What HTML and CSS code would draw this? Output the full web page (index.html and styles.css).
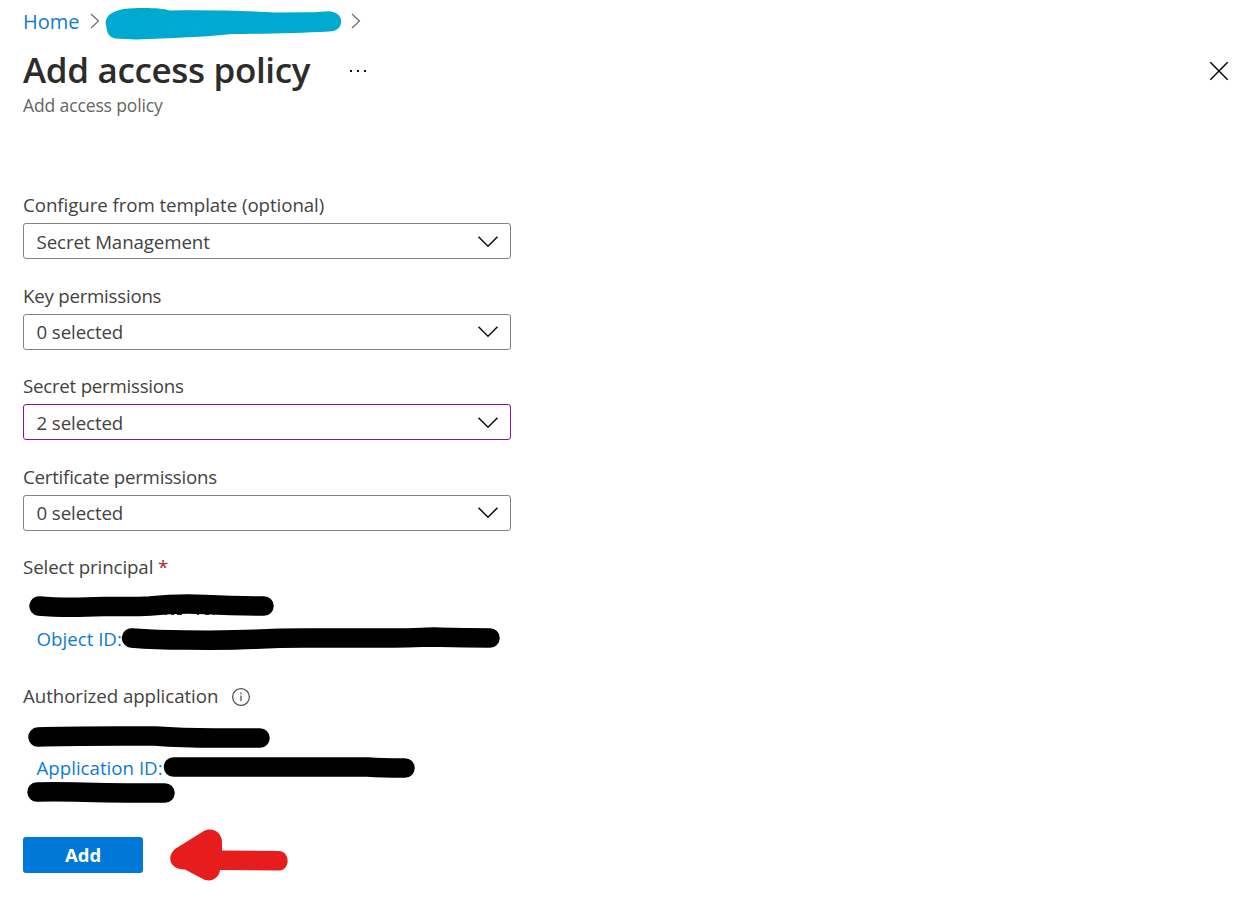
FILE: index.html
```html
<!DOCTYPE html>
<html lang="en">
<head>
<meta charset="utf-8">
<title>Add access policy</title>
<link rel="stylesheet" href="styles.css">
</head>
<body>
<main class="blade">
  <nav class="breadcrumb">
    <a class="link home" href="#">Home</a>
    <svg class="crumb" viewBox="0 0 10 16"><path d="M1 1L8.5 8L1 15"/></svg>
    <span class="crumb-name"></span>
    <svg class="crumb" viewBox="0 0 10 16"><path d="M1 1L8.5 8L1 15"/></svg>
  </nav>
  <header class="header">
    <h1 class="title">Add access policy</h1>
    <svg class="more" viewBox="0 0 18 4"><path d="M1 1h2v2H1zM8 1h2v2H8zM15 1h2v2H15z"/></svg>
    <svg class="close" viewBox="0 0 20 20"><path d="M1.3 1.3L18.7 18.7M18.7 1.3L1.3 18.7"/></svg>
  </header>
  <p class="subtitle">Add access policy</p>

  <form class="form">
    <div class="field">
      <div class="label label-template">Configure from template (optional)</div>
      <div class="select"><span class="value">Secret Management</span><svg class="chevron" viewBox="0 0 22 14"><path d="M1.5 1.7L11 11.2L20.5 1.7"/></svg></div>
    </div>
    <div class="field">
      <div class="label label-permissions">Key permissions</div>
      <div class="select"><span class="value">0 selected</span><svg class="chevron" viewBox="0 0 22 14"><path d="M1.5 1.7L11 11.2L20.5 1.7"/></svg></div>
    </div>
    <div class="field">
      <div class="label label-permissions">Secret permissions</div>
      <div class="select select-edited"><span class="value">2 selected</span><svg class="chevron" viewBox="0 0 22 14"><path d="M1.5 1.7L11 11.2L20.5 1.7"/></svg></div>
    </div>
    <div class="field">
      <div class="label label-permissions">Certificate permissions</div>
      <div class="select"><span class="value">0 selected</span><svg class="chevron" viewBox="0 0 22 14"><path d="M1.5 1.7L11 11.2L20.5 1.7"/></svg></div>
    </div>
    <section class="principal">
      <div class="label label-principal">Select principal <span class="required">*</span></div>
      <a class="link object-id" href="#">Object ID:</a>
    </section>
    <section class="application">
      <div class="label label-app">Authorized application
        <svg class="info" viewBox="0 0 20 20"><circle cx="10" cy="10" r="8.4"/><path d="M10 8.5V14M10 5.6V7.2"/></svg>
      </div>
      <a class="link app-id" href="#">Application ID:</a>
    </section>
    <button class="add" type="button">Add</button>
  </form>

  <svg class="ink" viewBox="0 0 1255 897">
    <path class="ink-cyan" d="M105.500 23C106 15 113 11 124 9C138 7.500 160 7.500 170 10.500C205 10 240 10.500 275 12.500L315 12.300L328 11.300C346 11.500 345 31.500 329 31.500C300 33 260 34 232 34C205 37 170 38 136 39.500L115 38.500C107 36.500 107 30 106.500 27Z"/>
    <path class="ink-black" d="M39 606C60 608 80 607.500 104 606.500C120 606.500 135 607 150 606C170 604 185 603.500 205 604.500C225 605.500 245 606 264 606"/>
    <path class="ink-trace" d="M165 614.500h2M171 614.500h3M177 614.500h5M197 614.500h2M205 614.500h4M213 614.500h2M220 614.500h2"/>
    <path class="ink-black" d="M131.500 638C150 639.500 165 640 185 640C215 640.300 240 640 255 639.300C275 638.200 290 638 305 638H395C415 638 425 637 435 637C450 637.500 460 638 490 638"/>
    <path class="ink-black" d="M38 737C75 735.500 120 736 155 736C175 737.500 190 738 215 738H260"/>
    <path class="ink-black" d="M173.500 767H368C380 768 390 768 405 768"/>
    <path class="ink-black" d="M37 792C65 791 90 793 165 793"/>
    <path class="ink-red" d="M175 849L203 831.500C213 826 222 833 222 842V850.500L279 851C291 852 290 870 279 870.500L220 870C219 878 211 883 203 879L185 869.500C170 870 166 857 175 849Z"/>
  </svg>
</main>
</body>
</html>
```
FILE: styles.css
```css
* { box-sizing: border-box; }
body {
  margin: 0;
  background: #fff;
  color: #444241;
  font-family: "Open Sans", "Noto Sans", sans-serif;
  font-size: 18.7px;
}
.blade {
  position: relative;
  height: 897px;
  padding: 8px 26px 0 23px;
  overflow: hidden;
}
.link { color: #0f7ad4; text-decoration: none; }
.breadcrumb { display: flex; align-items: center; height: 26px; }
.home { width: 67px; padding-top: 1px; font-size: 20px; line-height: 26px; }
.crumb { width: 10px; height: 16px; fill: none; stroke: #6b6967; stroke-width: 1.2; }
.crumb-name { width: 251px; }
.header { display: flex; align-items: center; height: 56px; padding-top: 18px; }
.title {
  width: 326px;
  margin: 0;
  padding-bottom: 2px;
  color: #2d2c2b;
  font-size: 35px;
  font-weight: 600;
  letter-spacing: -0.34px;
  line-height: 46px;
  white-space: nowrap;
}
.more { width: 18px; height: 4px; fill: #111; }
.close { width: 20px; height: 20px; margin-left: auto; fill: none; stroke: #000; stroke-width: 1.4; }
.subtitle { margin: 2px 0 0; color: #666462; font-size: 17.5px; letter-spacing: -0.12px; line-height: 26px; }
.form { width: 488px; padding-top: 74px; }
.field { height: 90.5px; }
.label { height: 31.300px; line-height: 26px; white-space: nowrap; }
.label-template { letter-spacing: -0.06px; }
.label-permissions { letter-spacing: -0.24px; }
.label-principal { letter-spacing: -0.1px; }
.label-app { letter-spacing: -0.06px; }
.select {
  display: flex;
  align-items: center;
  justify-content: space-between;
  height: 36px;
  padding: 1px 11px 0 12.500px;
  border: 1px solid #858381;
  border-radius: 3px;
}
.select-edited { border-color: #881798; }
.value { letter-spacing: -0.1px; line-height: 26px; }
.chevron { width: 22px; height: 14px; fill: none; stroke: #111; stroke-width: 1.6; }
.principal { height: 129px; }
.application { height: 154px; }
.principal .label, .application .label { height: 72px; }
.label-app { display: flex; align-items: flex-start; }
.required { color: #a4262c; }
.info { width: 20px; height: 20px; margin: 3.500px 0 0 13px; fill: none; stroke: #555; stroke-width: 1.3; }
.object-id, .app-id { display: block; padding-left: 13.500px; line-height: 26px; }
.add {
  width: 120px;
  height: 36px;
  padding: 0 0 2px;
  border: 0;
  border-radius: 3px;
  background: #0078d7;
  color: #fff;
  font: 700 18.500px "Open Sans", sans-serif;
}
.ink { position: absolute; top: 0; left: 0; width: 1255px; height: 897px; pointer-events: none; }
.ink-cyan { fill: #00a9cf; }
.ink-red { fill: #e71d1d; }
.ink-black { fill: none; stroke: #000; stroke-width: 19.500; stroke-linecap: round; stroke-linejoin: round; }
.ink-trace { fill: none; stroke: #222; stroke-width: 1; }
```
